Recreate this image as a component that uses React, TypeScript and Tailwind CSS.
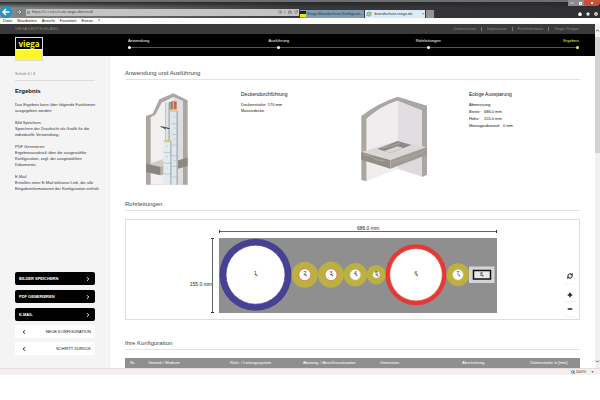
import { useState } from "react";
import {
  ChevronDown,
  ChevronLeft,
  ChevronRight,
  ChevronUp,
  Home,
  Lock,
  Minus,
  Plus,
  RefreshCw,
  RotateCw,
  Search,
  Settings,
  Star,
} from "lucide-react";

const menu = ["Datei", "Bearbeiten", "Ansicht", "Favoriten", "Extras", "?"];
const metaLinks = ["Datenschutz", "Impressum", "Rechtshinweis", "Viega Gruppe"];
const steps = ["Anwendung", "Ausführung", "Rohrleitungen", "Ergebnis"];

const hints = [
  ["Das Ergebnis kann über folgende Funktionen", "ausgegeben werden:"],
  ["Bild Speichern", "Speichern der Draufsicht als Grafik für die", "individuelle Verwendung."],
  ["PDF Generieren", "Ergebnisausdruck über die ausgewählte", "Konfiguration, zzgl. der ausgewählten", "Dokumente."],
  ["E-Mail", "Erstellen einer E-Mail inklusive Link, der alle", "Eingabeinformationen der Konfiguration enthält."],
];

const columns = [
  { label: "Nr.", width: "w-[4%]" },
  { label: "Gewerk / Medium", width: "w-[18%]" },
  { label: "Rohr- / Leitungssystem", width: "w-[16%]" },
  { label: "Abzweig- / Anschlusssituation", width: "w-[17%]" },
  { label: "Dimension", width: "w-[18%]" },
  { label: "Abschottung", width: "w-[15%]" },
  { label: "Dämmstärke in [mm]", width: "w-[12%]" },
];

// Mittelpunkt, Aussenradius und Innenradius je Rohr
const pipes = [
  { nr: 1, x: 255.5, r: 36, inner: 29.5, color: "#484092", ring: "#484092" },
  { nr: 2, x: 304.8, r: 13, inner: 6, color: "#bdb043", ring: "#e0603a" },
  { nr: 3, x: 331, r: 13, inner: 6, color: "#bdb043", ring: "#e0603a" },
  { nr: 4, x: 355.3, r: 11.7, inner: 5.3, color: "#bdb043", ring: "#d6d08a" },
  { nr: 5, x: 376.3, r: 9.7, inner: 3.4, color: "#bdb043", ring: "#d6d08a" },
  { nr: 6, x: 416, r: 30.5, inner: 26.3, color: "#e53935", ring: "#e53935" },
  { nr: 7, x: 458, r: 11.5, inner: 5.3, color: "#bdb043", ring: "#d6d08a" },
];

function BrowserBar() {
  return (
    <div className="relative flex h-[18px] items-end bg-linear-to-r from-[#8a8a8a] via-[#3a3a3c] via-50% to-[#303033] border-t-2 border-[#6c7072]">
      <div className="absolute inset-x-0 top-0 h-1.5 bg-linear-to-b from-[#26282a] to-transparent" />
      <div className="absolute right-0 -top-0.5 flex h-1.5">
        <button aria-label="Minimieren" className="flex w-2 items-center justify-center bg-[#8c8c8c] text-white">
          <Minus className="size-1" strokeWidth={4} />
        </button>
        <button aria-label="Maximieren" className="flex w-2 items-center justify-center bg-[#8c8c8c]">
          <span className="size-[3px] border border-white" />
        </button>
        <button aria-label="Schliessen" className="flex w-4 items-center justify-center rounded-br-sm bg-[#c9513a] text-white">
          <Plus className="size-1 rotate-45" strokeWidth={5} />
        </button>
      </div>
      <div className="relative flex h-4 w-1/2 items-center gap-1 pt-1 pr-px">
        <button aria-label="Zurück" className="flex size-3 flex-none items-center justify-center rounded-full bg-[#1f95c4]">
          <svg viewBox="0 0 12 12" className="size-3" fill="none" stroke="white" strokeWidth="1.5">
            <path d="M3 6h6.5M6 3 3 6l3 3" />
          </svg>
        </button>
        <button aria-label="Vorwärts" className="flex size-1.5 flex-none items-center justify-center rounded-full bg-[#777]">
          <svg viewBox="0 0 6 6" className="size-1.5" fill="none" stroke="#ccc">
            <path d="M1 3h4M3 1l2 2-2 2" />
          </svg>
        </button>
        <div className="flex h-[7px] min-w-0 flex-1 items-center gap-0.5 bg-[#c4c4c4] px-px text-[#666]">
          <span className="size-[3px] flex-none bg-[#68a8b5]" />
          <input
            aria-label="Adresse"
            readOnly
            value="https://brandschutz.viega.de/result"
            className="min-w-0 flex-1 bg-linear-to-r from-[#444] from-[11px] via-[#888] via-[11px] to-[#444] to-[34px] bg-clip-text text-[4px] leading-[6px] text-transparent outline-none"
          />
          <Search className="size-1" strokeWidth={3} />
          <span className="text-[3px]">▾</span>
          <Lock className="size-1" strokeWidth={3} />
          <RotateCw className="size-1" strokeWidth={3} />
        </div>
      </div>
      <div className="relative flex h-2 flex-1 items-stretch gap-px text-[4px]">
        <a href="#konfigurator" className="flex items-center gap-px bg-[#7f9bb2] pr-px whitespace-nowrap text-[#24384a]">
          <svg viewBox="0 0 6 6" className="size-1.5 flex-none">
            <path d="M0 0h6v6H0z" fill="#222" />
            <path d="M0 3h6v3H0z" fill="#f2e600" />
          </svg>
          Viega Brandschutz-Konfigurat...
        </a>
        <a href="#result" className="flex w-[60px] items-center gap-0.5 bg-[#dcecf7] px-px whitespace-nowrap text-[#333]">
          <svg viewBox="0 0 6 6" className="size-1.5 flex-none" fill="none">
            <circle cx="3" cy="3" r="2" stroke="#42a5d8" />
            <path d="M1 3h4M0 5 6 1" stroke="#b0bc4a" />
          </svg>
          brandschutz.viega.de
          <span className="ml-auto">×</span>
        </a>
        <span className="w-2 bg-[#949494]" />
        <div className="ml-auto flex items-center gap-1 pr-0.5 text-white">
          <Home className="size-1" fill="white" strokeWidth={3} />
          <Star className="size-1" fill="white" strokeWidth={3} />
          <Settings className="size-1" strokeWidth={5} />
        </div>
      </div>
    </div>
  );
}

function Heading({ children }: { children: string }) {
  return (
    <h2 className="border-b border-[#e2e2e2] pb-px text-[6px] leading-[9px] text-[#444]">{children}</h2>
  );
}

function ShaftDrawing() {
  return (
    <svg viewBox="75 96 135 282" className="h-[94px] w-[45px] flex-none">
      <path d="M78 168 98 161 118 118 160 100 203 121V374H78Z" fill="#aba6a1" />
      <path d="M92 374V172L106 164 125 128 160 111 189 124V374Z" fill="#f1eff0" />
      <path d="M160 111 189 124V374H160Z" fill="#dedde0" />
      <path d="M92 310 133 296V320L120 345 92 338Z" fill="#d0ccc8" />
      <path d="M78 311 122 321V346L78 336Z" fill="#8a8480" />
      <path d="M122 321 140 310V343L122 346Z" fill="#b9b2ab" />
      <path d="M171 302 203 292V318L171 327Z" fill="#8f8984" />
      <path d="M135 127h12v115h-12z" fill="#bfc7cb" />
      <path d="M139 127h4v115h-4z" fill="#edf2f4" />
      <path d="M147 126h6v120h-6z" fill="#98a1a5" />
      <path d="M153 124h17v30h-17z" fill="#bd6d50" />
      <path d="M158 122h4v31h-4z" fill="#e0a48a" />
      <path d="M149 149 173 149V374H149Z" fill="#dfe7eb" />
      <path d="M169 152h5v222h-5z" fill="#aeb9bf" />
      <ellipse cx="161" cy="152" rx="12" ry="4" fill="#d8cf83" />
      <path d="M130 243h25v131h-25z" fill="#e3ebef" />
      <path d="M150 243h5v131h-5z" fill="#b3bfc6" />
      <ellipse cx="143" cy="243" rx="13" ry="4" fill="#d6cd76" />
      <path
        d="M130 276q12 5 25 0M130 308q12 5 25 0M130 340q12 5 25 0M155 190q9 4 18 0M155 222q9 4 18 0M155 254q9 4 18 0M155 286q9 4 18 0M155 318q9 4 18 0M155 350q9 4 18 0"
        fill="none"
        stroke="#98a5ad"
        strokeWidth="1.5"
      />
      <path d="M141 256v4M141 288v4M141 322v4M164 168v4M164 202v4M164 236v4M164 300v4" stroke="#9aa4aa" strokeWidth="2" />
      <path d="M122 200 137 203 148 206M130 203 137 207" fill="none" stroke="#333" strokeWidth="3" />
    </svg>
  );
}

function OpeningDrawing() {
  return (
    <svg viewBox="30 108 204 258" className="h-[86px] w-[68px] flex-none">
      <path d="M34 168Q82 130 143 110L231 137V344L216 351V154L143 122Q92 138 50 176V364L34 360Z" fill="#aaa6a1" />
      <path d="M50 176Q92 138 143 122V245L50 278Z" fill="#efedee" />
      <path d="M143 122 216 151V262L143 243Z" fill="#e0dee1" />
      <path d="M50 302 122 324 143 316V326L50 363Z" fill="#efedee" />
      <path d="M143 316 216 290V350L143 326Z" fill="#dcdadd" />
      <path d="M34 276 143 242 231 262 121 300Z" fill="#dad9da" />
      <path d="M82 267 143 243 184 255 122 279Z" fill="#8e8984" />
      <path d="M102 273 142 259 160 264 122 279Z" fill="#d7d5d5" />
      <path d="M34 276 121 300V326L34 299Z" fill="#928d88" />
      <path d="M121 300 231 261V285L121 326Z" fill="#a19b95" />
      <path d="M40 284 60 288 78 299 104 303M130 307 160 296 178 293 222 274M97 264 130 256 150 249" fill="none" stroke="#aea9a3" strokeWidth="3" />
    </svg>
  );
}

function PipeLabel({ nr, x, y }: { nr: number; x: number; y: number }) {
  return (
    <g>
      <text x={x} y={y} fontSize="5" textAnchor="middle" fill="#222">
        {nr}
      </text>
      <path d={`M${x} ${y}h1.5v1.3`} fill="none" stroke="#333" strokeWidth="0.6" />
    </g>
  );
}

function PipeDrawing() {
  return (
    <svg viewBox="187 224 331 92" className="mx-auto h-[92px] w-[331px]">
      <path d="M219.5 231.5h277M212.5 238.5v74" stroke="#666" />
      <path d="M219.5 230v3M496.5 230v3M211 238.5h3M211 312.5h3" stroke="#333" />
      <text x="368" y="230" fontSize="5" textAnchor="middle" fill="#222">686.0 mm</text>
      <text x="212" y="286" fontSize="5" textAnchor="end" fill="#222">155.0 mm</text>
      <path d="M219 238h278v75H219z" fill="#8f8f8f" />
      {pipes.map((pipe) => (
        <g key={pipe.nr}>
          <circle cx={pipe.x} cy="274.7" r={pipe.r} fill={pipe.color} />
          <circle cx={pipe.x} cy="274.7" r={pipe.inner} fill="white" stroke={pipe.ring} strokeWidth="0.7" />
          <PipeLabel nr={pipe.nr} x={pipe.x} y={275} />
        </g>
      ))}
      <path d="M469 266.5h25.5V283H469z" fill="#d5d5d5" />
      <path d="M473.5 270.5h17v8.5h-17z" fill="#e9e9e9" stroke="#111" strokeWidth="1.5" />
      <PipeLabel nr={8} x={481.5} y={275.5} />
    </svg>
  );
}

function ActionButton({ label }: { label: string }) {
  return (
    <button className="flex h-[13px] items-center justify-between rounded-xs bg-black px-1 text-[4px] font-bold text-white">
      {label}
      <ChevronRight className="size-1.5" strokeWidth={4} />
    </button>
  );
}

function BackButton({ label }: { label: string }) {
  return (
    <button className="flex h-[13px] items-center justify-between rounded-xs bg-white px-1 text-[4px] text-[#111]">
      <ChevronLeft className="ml-0.5 size-1.5" strokeWidth={4} />
      {label}
    </button>
  );
}

export default function App() {
  const [zoom, setZoom] = useState(100);

  return (
    <div className="min-h-screen bg-white font-['Liberation_Sans',Arial,sans-serif]">
      <BrowserBar />
      <nav className="flex h-1.5 items-center gap-[5px] bg-[#fcfcfc] px-[3px] text-[4px] leading-[6px] text-[#222]">
        {menu.map((item) => (
          <a key={item} href="#menu">
            {item}
          </a>
        ))}
      </nav>

      <div className="flex">
        <div className="min-w-0 flex-1">
          <div className="flex h-2.5 items-center justify-between bg-[#3a3a3a] pr-4 pl-[15px] text-[4px] text-[#858585]">
            <span>VIEGA DEUTSCHLAND</span>
            <div className="flex divide-x divide-[#777] leading-[4px]">
              {metaLinks.map((link) => (
                <a key={link} href="#meta" className="px-[5px] last:pr-0">
                  {link}
                </a>
              ))}
            </div>
          </div>

          <header className="relative h-[22px] bg-black pr-4 pl-32">
            {/* Logo ragt unten in die Seite hinein */}
            <a
              href="#home"
              className="absolute top-[3px] left-[15px] flex h-6 w-7 flex-col border border-[#ddd] bg-[#fdf731]"
            >
              <span className="border-b border-white bg-black text-center font-['Open_Sans',sans-serif] text-[8px] leading-[11px] font-bold text-[#f3ef2a]">
                viega
              </span>
            </a>
            <div className="relative pt-1">
              <div className="absolute inset-x-0 top-[13px] h-px bg-[#555]" />
              <ol className="relative flex justify-between text-[4px] leading-[6px] text-white">
                {steps.map((step) => (
                  <li
                    key={step}
                    className="flex w-[3px] flex-col items-center gap-0.5 whitespace-nowrap first:items-start last:items-end last:text-[#f1ee3a]"
                  >
                    <span>{step}</span>
                    <span className="size-[3px] rounded-full bg-current" />
                  </li>
                ))}
              </ol>
            </div>
          </header>

          <div className="flex">
            <aside className="flex w-[110px] flex-none flex-col border-r border-[#eee] bg-[#f4f4f4] pr-3.5 pb-[13px] pl-[15px] text-[4px] leading-[6px] text-[#333]">
              <p className="border-b border-[#ddd] pt-[15px] pb-[3px] text-[#777]">Schritt 4 / 4</p>
              <h1 className="mt-1.5 text-[6px] leading-[9px] font-bold text-[#111]">Ergebnis</h1>
              {hints.map((lines) => (
                <p key={lines[0]} className="mt-1.5 whitespace-nowrap">
                  {lines.map((line) => (
                    <span key={line} className="block">
                      {line}
                    </span>
                  ))}
                </p>
              ))}
              <div className="mt-auto flex flex-col gap-[5px]">
                <ActionButton label="BILDER SPEICHERN" />
                <ActionButton label="PDF GENERIEREN" />
                <ActionButton label="E-MAIL" />
              </div>
              <div className="mt-1 flex flex-col gap-1">
                <BackButton label="NEUE KONFIGURATION" />
                <BackButton label="SCHRITT ZURÜCK" />
              </div>
            </aside>

            <main className="min-w-0 flex-1 pt-[13px] pr-[15px] pl-[15px] text-[#111]">
              <Heading>Anwendung und Ausführung</Heading>
              <section className="grid grid-cols-[116fr_119fr_109fr_111fr] text-[4px]">
                <div className="pt-3 pl-5">
                  <ShaftDrawing />
                </div>
                <div className="pt-2.5">
                  <h3 className="text-[5px] leading-[8px]">Deckendurchführung</h3>
                  <p className="mt-1 leading-[6px]">Deckenstärke: 170 mm</p>
                  <p className="leading-[6px]">Massivdecke</p>
                </div>
                <div className="pt-4">
                  <OpeningDrawing />
                </div>
                <div className="pt-2.5 leading-[7px]">
                  <h3 className="text-[5px] leading-[8px]">Eckige Aussparung</h3>
                  <p className="mt-[3px]">Abmessung:</p>
                  <p className="flex gap-[3px]">
                    <span className="w-3">Breite:</span>
                    <span>686.0 mm</span>
                  </p>
                  <p className="flex gap-[3px]">
                    <span className="w-3">Höhe:</span>
                    <span>155.0 mm</span>
                  </p>
                  <p className="flex gap-[3px]">
                    <span>Montageabstand:</span>
                    <span>0 mm</span>
                  </p>
                </div>
              </section>

              <div className="mt-3.5">
                <Heading>Rohrleitungen</Heading>
              </div>
              <section className="relative mt-2 border border-[#ddd] pt-1 pb-[3px]">
                <PipeDrawing />
                <div className="absolute right-[3px] bottom-[3px] flex w-3 flex-col text-[#222]">
                  <button
                    aria-label="Zurücksetzen"
                    onClick={() => setZoom(100)}
                    className="mb-[5px] flex h-3.5 items-center justify-center bg-white shadow-xs"
                  >
                    <RefreshCw className="size-1.5" strokeWidth={4} />
                  </button>
                  <button
                    aria-label="Vergrössern"
                    onClick={() => setZoom(zoom + 10)}
                    className="flex h-3.5 items-center justify-center border-b border-[#eee] bg-white"
                  >
                    <Plus className="size-1.5" strokeWidth={6} />
                  </button>
                  <button
                    aria-label="Verkleinern"
                    onClick={() => setZoom(zoom - 10)}
                    className="flex h-3.5 items-center justify-center bg-white shadow-xs"
                  >
                    <Minus className="size-1.5" strokeWidth={6} />
                  </button>
                </div>
              </section>

              <div className="mt-[19px]">
                <Heading>Ihre Konfiguration</Heading>
              </div>
              <table className="mt-2 w-full table-fixed bg-[#8f8f8f] text-left text-[4px] leading-[10px] text-white">
                <thead>
                  <tr>
                    {columns.map((column) => (
                      <th key={column.label} className={`${column.width} p-0 pl-[5px] font-normal whitespace-nowrap`}>
                        {column.label}
                      </th>
                    ))}
                  </tr>
                </thead>
              </table>
            </main>
          </div>
        </div>

        {/* Bildlaufleiste */}
        <div className="flex w-[5px] flex-none flex-col items-center bg-[#f2f0f0] text-[#444]">
          <ChevronUp className="my-1 size-[5px]" strokeWidth={4} />
          <span className="w-full grow-[4] bg-[#d2d2d2]" />
          <span className="grow-[7]" />
          <ChevronDown className="my-1 size-[5px]" strokeWidth={4} />
        </div>
      </div>

      <footer className="flex h-[7px] items-center justify-end gap-px border-t border-[#e2dfde] bg-[#f3efee] pr-1.5 text-[4px] leading-[6px] text-[#333]">
        <Search className="size-1 text-[#3a78b5]" strokeWidth={5} />
        {zoom}%
        <span className="ml-1 text-[3px]">▼</span>
      </footer>
    </div>
  );
}
